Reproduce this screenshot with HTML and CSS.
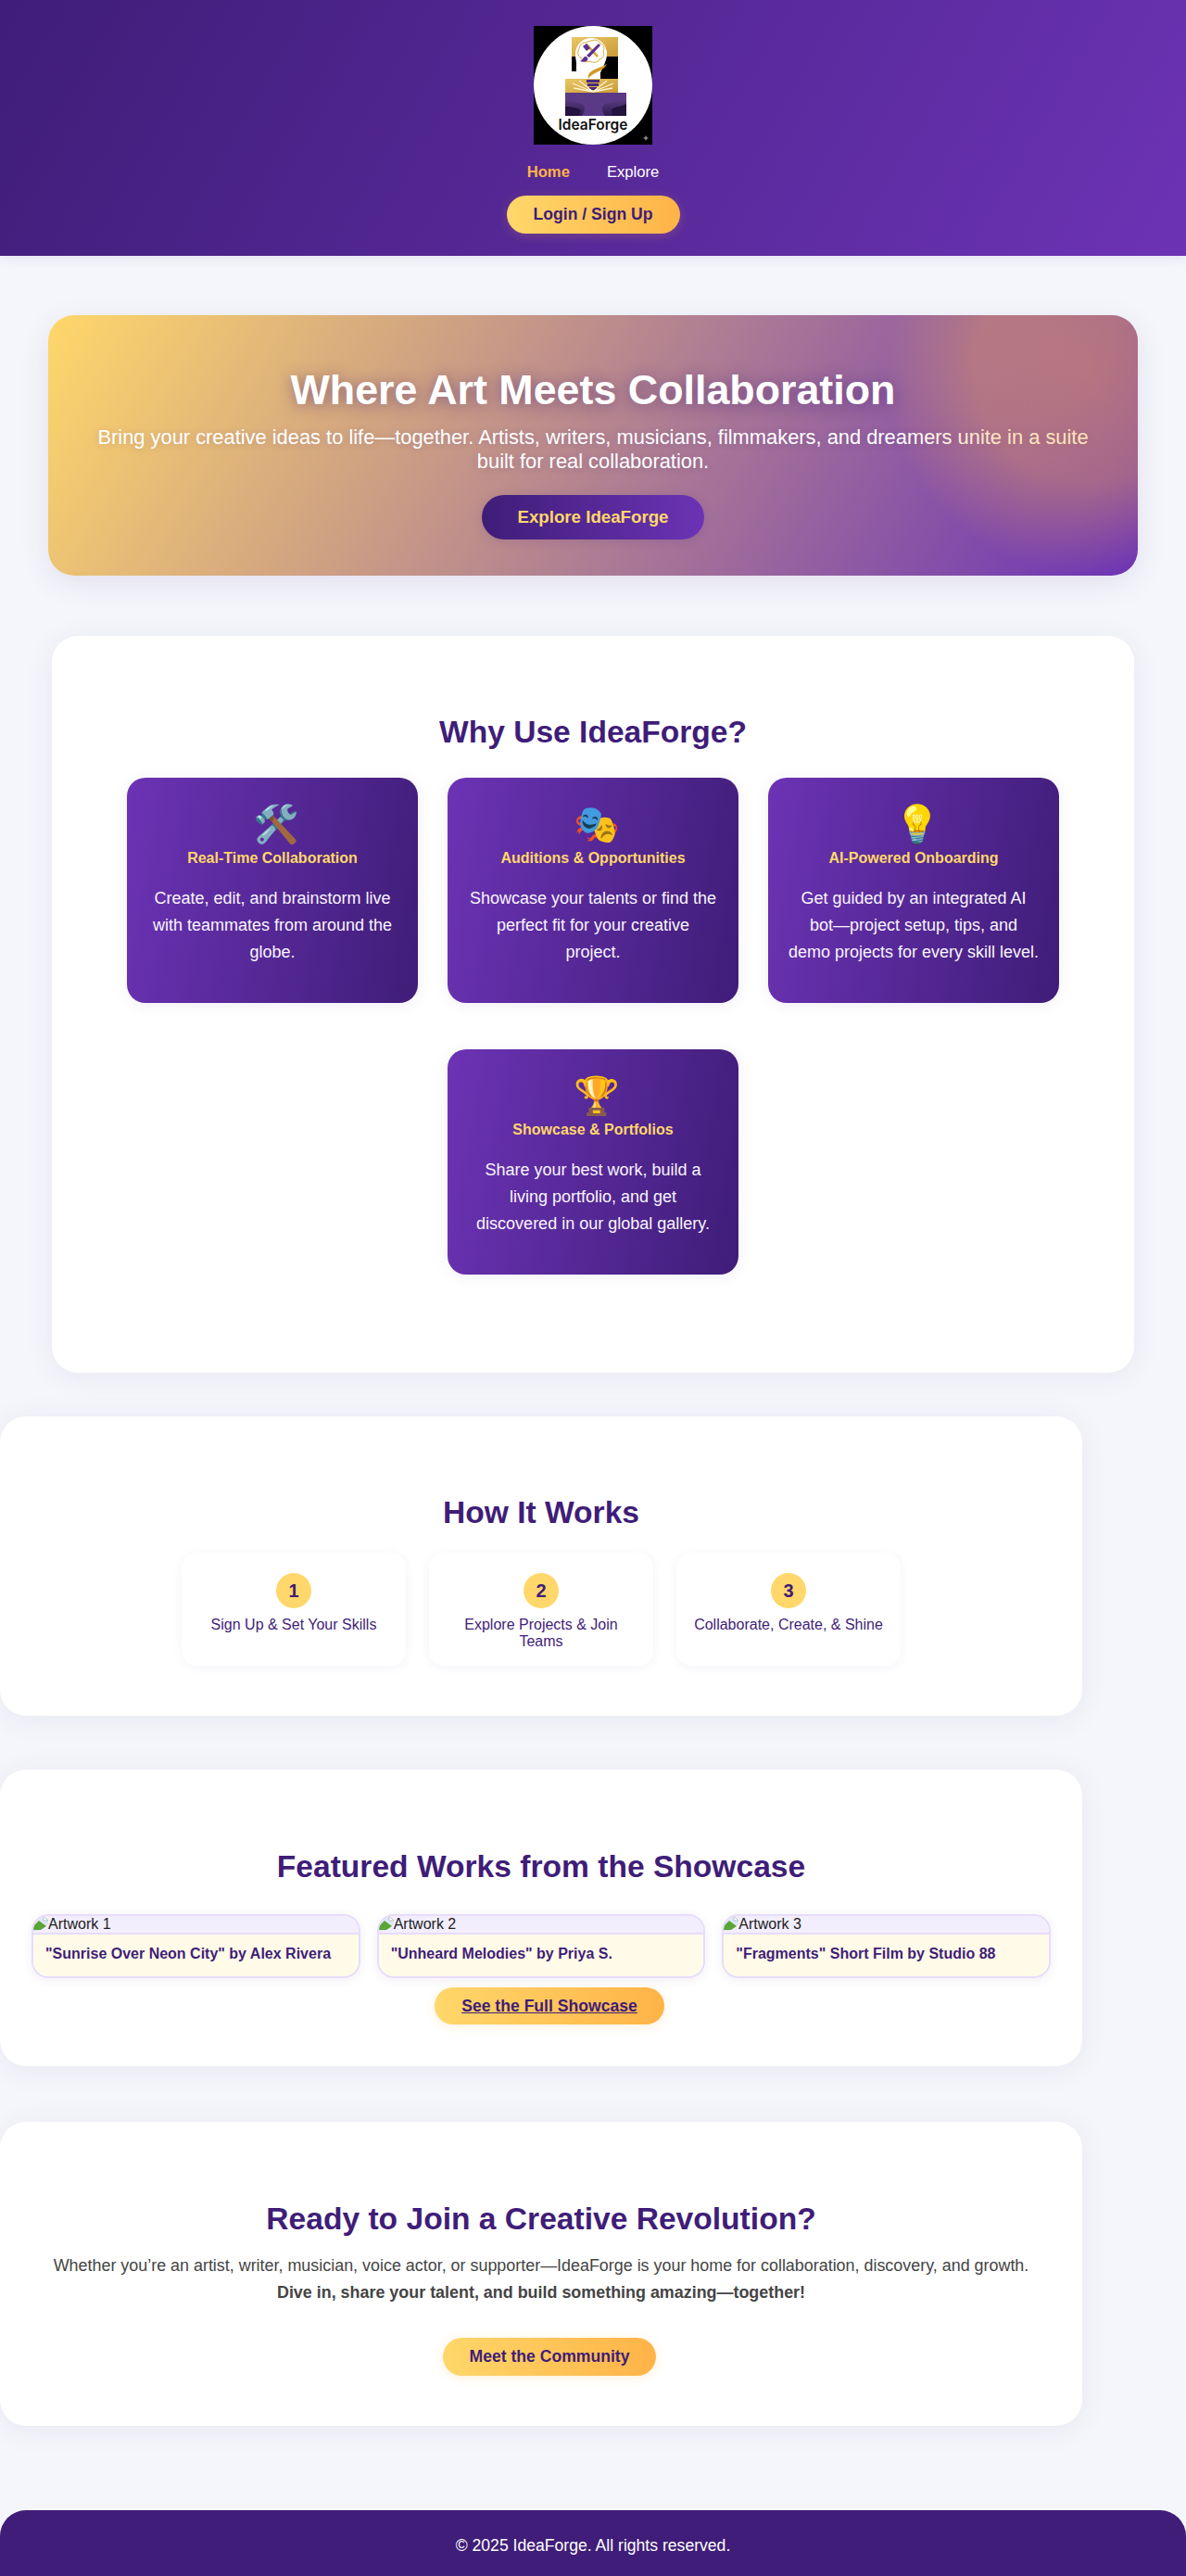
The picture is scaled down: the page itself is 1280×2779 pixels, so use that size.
FILE: index.html
```html
<!DOCTYPE html>
<html lang="en">
<head>
    <meta charset="UTF-8">
    <meta name="viewport" content="width=device-width, initial-scale=1.0">
    <title>IdeaForge</title>
    <link rel="stylesheet" href="styles.css">
</head>
<body>
    <header class="site-header">
        <svg class="logo" viewBox="0 0 128 128" role="img" aria-label="IdeaForge logo">
            <defs>
                <linearGradient id="anvil" x1="0" y1="0" x2="0" y2="1">
                    <stop offset="0" stop-color="#6b4a93"/>
                    <stop offset="1" stop-color="#2e1a4f"/>
                </linearGradient>
                <linearGradient id="gold" x1="0" y1="0" x2="1" y2="1">
                    <stop offset="0" stop-color="#e9c766"/>
                    <stop offset="1" stop-color="#c99a36"/>
                </linearGradient>
            </defs>
            <rect width="128" height="128" fill="#000"/>
            <circle cx="64" cy="64" r="64" fill="#fff"/>
            <rect x="41" y="12" width="50" height="21" fill="url(#gold)"/>
            <rect x="41" y="33" width="5" height="16" fill="#000"/>
            <rect x="72" y="33" width="19" height="24" fill="#000"/>
            <rect x="34" y="57" width="57" height="15" fill="url(#gold)"/>
            <rect x="34" y="72" width="66" height="25" fill="url(#anvil)"/>
            <path d="M52 57c-1-8-7-13-7-27a17 17 0 0 1 34 0c0 10-7 17-9 27z" fill="#fff"/>
            <path d="M62 16c5-2 9 0 10 3 4 1 5 5 3 8 2 4 0 8-4 9-2 4-7 4-10 2-4 2-9 0-10-4-4-2-4-7-2-9 0-4 4-8 8-7 1-1 3-2 5-2z" fill="none" stroke="#d8a93e" stroke-width="1"/>
            <path d="M56 21l2-2 12 13-2 2z" fill="#d8a93e"/>
            <path d="M70 19l2 2-12 13-3-2z" fill="#5b2f91"/>
            <path d="M53 22l4-3 4 5-4 3z" fill="#5b2f91"/>
            <path d="M55 33c3 0 4 2 3 4s-5 2-8 1c2-1 3-3 5-5z" fill="#5b2f91"/>
            <path d="M79 41c-6 4-14 5-18 9-2 2-3 4-2 7 1-2 2-3 4-4 5-4 13-5 16-12z" fill="#d39a24"/>
            <path d="M57 58h14v3H57zM58 62h12v3H58zM60 66h8v3h-8z" fill="#4a2a7a"/>
            <path d="M64 71L42 62M64 71l-21-4M64 71L49 59M64 71l22-9M64 71l21-4M64 71l15-12" stroke="#fff3cf" stroke-width="1.3"/>
            <path d="M34 72h66v5c-8 6-18 4-24 8-3 2-2 8 1 12H52c3-4 4-10 1-12-6-4-13-2-19-8z" fill="#5a3a86"/>
            <path d="M34 87c6 0 13 1 17 4l-2 6H34zM100 84c-5 3-12 3-16 6l1 7h15z" fill="#24123f"/>
            <text class="logo-name" x="64" y="111.5" text-anchor="middle">IdeaForge</text>
            <path d="M121 118l1 2 2 1-2 1-1 2-1-2-2-1 2-1z" fill="#8a8a8a"/>
        </svg>
        <nav class="main-nav">
            <a class="nav-link active" href="#">Home</a>
            <a class="nav-link" href="#">Explore</a>
        </nav>
        <a class="btn btn-gold btn-login" href="#">Login / Sign Up</a>
    </header>

    <section class="hero">
        <h1>Where Art Meets Collaboration</h1>
        <p class="hero-text">Bring your creative ideas to life—together. Artists, writers, musicians, filmmakers, and dreamers unite in a suite built for real collaboration.</p>
        <a class="btn btn-purple" href="#">Explore IdeaForge</a>
    </section>

    <section class="panel why">
        <h2>Why Use IdeaForge?</h2>
        <div class="features">
            <div class="feature">
                <div class="feature-icon">🛠️</div>
                <h3>Real-Time Collaboration</h3>
                <p>Create, edit, and brainstorm live with teammates from around the globe.</p>
            </div>
            <div class="feature">
                <div class="feature-icon">🎭</div>
                <h3>Auditions &amp; Opportunities</h3>
                <p>Showcase your talents or find the perfect fit for your creative project.</p>
            </div>
            <div class="feature">
                <div class="feature-icon">💡</div>
                <h3>AI-Powered Onboarding</h3>
                <p>Get guided by an integrated AI bot—project setup, tips, and demo projects for every skill level.</p>
            </div>
            <div class="feature">
                <div class="feature-icon">🏆</div>
                <h3>Showcase &amp; Portfolios</h3>
                <p>Share your best work, build a living portfolio, and get discovered in our global gallery.</p>
            </div>
        </div>
    </section>

    <section class="panel panel-left how">
        <h2>How It Works</h2>
        <div class="steps">
            <div class="step">
                <span class="step-num">1</span>
                <p>Sign Up &amp; Set Your Skills</p>
            </div>
            <div class="step">
                <span class="step-num">2</span>
                <p>Explore Projects &amp; Join Teams</p>
            </div>
            <div class="step">
                <span class="step-num">3</span>
                <p>Collaborate, Create, &amp; Shine</p>
            </div>
        </div>
    </section>

    <section class="panel panel-left featured">
        <h2>Featured Works from the Showcase</h2>
        <div class="gallery">
            <div class="work">
                <div class="work-img">
                    <svg class="broken" viewBox="0 0 16 16"><path d="M0 0h11l5 5v4L6 16H0z" fill="#dde6f3"/><path d="M11 0v5h5z" fill="#fff" stroke="#a5adb9" stroke-width=".7"/><path d="M0 15v-4l6-6 8 6-6 4z" fill="#5aa535"/></svg>
                    <span>Artwork 1</span>
                </div>
                <div class="work-cap">"Sunrise Over Neon City" by Alex Rivera</div>
            </div>
            <div class="work">
                <div class="work-img">
                    <svg class="broken" viewBox="0 0 16 16"><path d="M0 0h11l5 5v4L6 16H0z" fill="#dde6f3"/><path d="M11 0v5h5z" fill="#fff" stroke="#a5adb9" stroke-width=".7"/><path d="M0 15v-4l6-6 8 6-6 4z" fill="#5aa535"/></svg>
                    <span>Artwork 2</span>
                </div>
                <div class="work-cap">"Unheard Melodies" by Priya S.</div>
            </div>
            <div class="work">
                <div class="work-img">
                    <svg class="broken" viewBox="0 0 16 16"><path d="M0 0h11l5 5v4L6 16H0z" fill="#dde6f3"/><path d="M11 0v5h5z" fill="#fff" stroke="#a5adb9" stroke-width=".7"/><path d="M0 15v-4l6-6 8 6-6 4z" fill="#5aa535"/></svg>
                    <span>Artwork 3</span>
                </div>
                <div class="work-cap">"Fragments" Short Film by Studio 88</div>
            </div>
        </div>
        <a class="btn btn-gold btn-showcase" href="#">See the Full Showcase</a>
    </section>

    <section class="panel panel-left join">
        <h2>Ready to Join a Creative Revolution?</h2>
        <p class="join-text">Whether you’re an artist, writer, musician, voice actor, or supporter—IdeaForge is your home for collaboration, discovery, and growth.<br><strong>Dive in, share your talent, and build something amazing—together!</strong></p>
        <a class="btn btn-gold btn-community" href="#">Meet the Community</a>
    </section>

    <footer class="site-footer">© 2025 IdeaForge. All rights reserved.</footer>
</body>
</html>
```

FILE: styles.css
```css
body {
    margin: 0;
    font-family: "Liberation Sans", Arial, sans-serif;
    background-color: #f5f6fb;
    color: #333;
}

/* header */
.site-header {
    height: 248px;
    padding-top: 28px;
    display: flex;
    flex-direction: column;
    align-items: center;
    background: linear-gradient(120deg, #3f1d78 0%, #6c33b5 100%);
    box-shadow: 0 2px 12px rgba(63, 29, 120, 0.1);
}
.logo {
    display: block;
    width: 128px;
    height: 128px;
}
.logo-name {
    font-family: Inter, "Liberation Sans", sans-serif;
    font-size: 15.5px;
    font-weight: 600;
    fill: #111;
}
.main-nav {
    display: flex;
    gap: 40px;
    margin-top: 20px;
}
.nav-link {
    color: #fff;
    font-size: 16.64px;
    line-height: 19px;
    text-decoration: none;
}
.nav-link.active {
    color: #ffb347;
    font-weight: bold;
}

/* buttons */
.btn {
    display: inline-block;
    border-radius: 24px;
    font-weight: bold;
    text-decoration: none;
}
.btn-gold {
    color: #3f1d78;
    background: linear-gradient(90deg, #ffd76a 0%, #ffb347 100%);
    box-shadow: 0 2px 12px rgba(255, 179, 71, 0.2);
}
.btn-login {
    margin-top: 16px;
    padding: 0 29px;
    font-size: 17.6px;
    line-height: 41px;
}
.btn-purple {
    margin-top: 3px;
    padding: 0 38.5px;
    color: #ffd76a;
    font-size: 18.7px;
    line-height: 48px;
    background: linear-gradient(90deg, #3f1d78 0%, #6c33b5 100%);
    box-shadow: 0 2px 12px rgba(63, 29, 120, 0.15);
}

/* hero */
.hero {
    position: relative;
    overflow: hidden;
    height: 281px;
    box-sizing: border-box;
    margin: 64px 52px 0;
    padding: 54px 40px 0;
    text-align: center;
    color: #fff;
    border-radius: 28px;
    background: linear-gradient(120deg, #ffd76a 0%, #6c33b5 100%);
    box-shadow: 0 8px 32px rgba(63, 29, 120, 0.1);
}
/* warm glow sits over the text in the top right corner */
.hero::after {
    content: "";
    position: absolute;
    top: -160px;
    right: -167px;
    width: 440px;
    height: 440px;
    background: radial-gradient(circle closest-side, rgba(255, 179, 71, 0.42) 0%, rgba(255, 179, 71, 0.34) 55%, rgba(255, 179, 71, 0) 100%);
}
.hero h1 {
    margin: 0;
    font-size: 44.8px;
    line-height: 52px;
    text-shadow: 0 2px 16px rgba(63, 29, 120, 0.5);
}
.hero-text {
    margin: 13px 0 20px;
    font-size: 21.86px;
    line-height: 26px;
    text-shadow: 0 1px 8px rgba(63, 29, 120, 0.2);
}

/* white panels */
.panel {
    box-sizing: border-box;
    text-align: center;
    background-color: #fff;
    border-radius: 28px;
    box-shadow: 0 4px 32px rgba(63, 29, 120, 0.07);
}
.panel h2 {
    margin: 0;
    color: #3f1d78;
    font-size: 33.6px;
    line-height: 40px;
}
.panel-left {
    width: 1168px;
}

.why {
    height: 795px;
    margin: 65px 56px 0;
    padding-top: 84px;
}
.features {
    display: flex;
    flex-wrap: wrap;
    justify-content: center;
    gap: 50px 32px;
    margin-top: 29px;
}
.feature {
    box-sizing: border-box;
    width: 314px;
    height: 243px;
    padding: 27px 21px 0;
    color: #f8f5ff;
    background: linear-gradient(100deg, #6c33b5 0%, #3f1d78 100%);
    border-radius: 20px;
    box-shadow: 0 2px 16px rgba(63, 29, 120, 0.08);
}
.feature-icon {
    padding-left: 8px;
    font-size: 40px;
    line-height: 47px;
}
.feature h3 {
    margin: 3px 0 0;
    color: #ffd76a;
    font-size: 16px;
    line-height: 20px;
}
.feature p {
    margin: 19px 0 0;
    font-size: 18px;
    line-height: 28.8px;
}

.how {
    height: 323px;
    margin-top: 47px;
    padding-top: 84px;
}
.steps {
    display: flex;
    justify-content: center;
    gap: 25px;
    margin-top: 23px;
}
.step {
    box-sizing: border-box;
    width: 242px;
    height: 122px;
    padding: 22px 16px 0;
    color: #3f1d78;
    background-color: #fff;
    border-radius: 16px;
    box-shadow: 0 2px 12px rgba(63, 29, 120, 0.06);
}
.step-num {
    display: block;
    width: 38px;
    height: 38px;
    margin: 0 auto;
    color: #3f1d78;
    font-size: 20px;
    font-weight: bold;
    line-height: 38px;
    background-color: #ffd76a;
    border-radius: 50%;
}
.step p {
    margin: 9px 0 0;
    font-size: 16px;
    line-height: 18.4px;
}

.featured {
    height: 320px;
    margin-top: 58px;
    padding: 85px 34px 0;
}
.gallery {
    display: grid;
    grid-template-columns: repeat(3, 1fr);
    gap: 18px;
    margin-top: 31px;
}
.work {
    height: 69px;
    box-sizing: border-box;
    overflow: hidden;
    text-align: left;
    border: 2px solid #e8dcfb;
    border-radius: 18px;
    box-shadow: 0 2px 12px rgba(63, 29, 120, 0.08);
}
.work-img {
    display: flex;
    height: 18px;
    color: #222;
    font-size: 16px;
    line-height: 18px;
    background-color: #f3eefe;
    border-bottom: 2px solid #e8dcfb;
}
.broken {
    flex: none;
    width: 16px;
    height: 16px;
}
.work-cap {
    height: 47px;
    box-sizing: border-box;
    padding: 12px 13px 0;
    color: #3f1d78;
    font-size: 16px;
    font-weight: bold;
    line-height: 18.4px;
    background-color: #fffbe8;
}
.btn-showcase {
    margin: 10px 0 0 18px;
    padding: 0 28.8px;
    font-size: 17.6px;
    line-height: 40px;
    text-decoration: underline;
}

.join {
    height: 328px;
    margin-top: 60px;
    padding: 85px 40px 0;
}
.join-text {
    margin: 16px 0 0;
    color: #444;
    font-size: 17.92px;
    line-height: 28.8px;
}
.btn-community {
    margin: 34px 0 0 18px;
    padding: 0 28.8px;
    font-size: 17.6px;
    line-height: 41px;
}

/* footer */
.site-footer {
    height: 71px;
    margin-top: 91px;
    color: #fff;
    font-size: 17.6px;
    line-height: 77px;
    text-align: center;
    background-color: #3f1d78;
    border-radius: 28px 28px 0 0;
}
```
